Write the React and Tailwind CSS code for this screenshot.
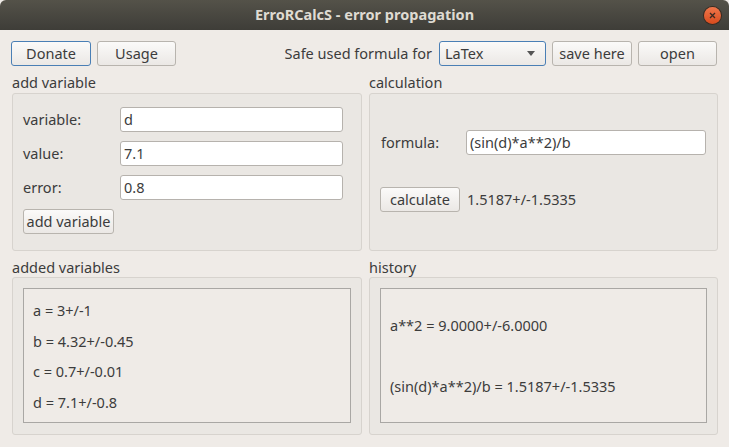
import React from "react";

const font = { fontFamily: '"Noto Sans", "Open Sans", sans-serif' };

function Btn({ children, className = "", focused = false }) {
  return (
    <div
      className={`flex items-center justify-center rounded-[3px] border bg-gradient-to-b from-[#fbfaf9] to-[#ebe8e5] text-[14.5px] text-[#3c3c3c] ${
        focused ? "border-[#4a7fb5]" : "border-[#b8b4ae]"
      } ${className}`}
    >
      {children}
    </div>
  );
}

function Input({ value, className = "" }) {
  return (
    <div
      className={`flex h-[25px] items-center rounded-[3px] border border-[#b6b2ad] bg-white pl-[3px] text-[14.5px] text-[#3c3c3c] ${className}`}
    >
      {value}
    </div>
  );
}

export default function App() {
  return (
    <div
      className="h-[447px] w-[729px] overflow-hidden bg-[#efebe7] text-[#3c3c3c]"
      style={font}
    >
      {/* title bar */}
      <div className="relative flex h-[30px] items-center justify-center rounded-t-[6px] bg-gradient-to-b from-[#545249] to-[#3e3d38]">
        <span className="text-[14.5px] font-bold text-[#dfdbd2]">
          ErroRCalcS - error propagation
        </span>
        <div className="absolute right-[8px] top-[7px] flex h-[17px] w-[17px] items-center justify-center rounded-full bg-gradient-to-b from-[#f0764a] to-[#d84a1b] shadow-[0_0_0_1px_#3a2a20]">
          <svg width="7" height="7" viewBox="0 0 7 7">
            <path d="M1 1L6 6M6 1L1 6" stroke="#3b2a22" strokeWidth="1.3" />
          </svg>
        </div>
      </div>

      {/* toolbar */}
      <div className="mt-[11px] flex h-[25px] items-center pl-[11px] pr-[12px]">
        <Btn focused className="h-[25px] w-[80px]">Donate</Btn>
        <Btn className="ml-[6px] h-[25px] w-[79px]">Usage</Btn>
        <span className="ml-auto text-[14.5px]">Safe used formula for</span>
        <div className="ml-[7px] flex h-[25px] w-[107px] items-center justify-between rounded-[3px] border border-[#4a7fb5] bg-gradient-to-b from-[#fbfaf9] to-[#ebe8e5] pl-[5px] pr-[10px] text-[14.5px]">
          <span>LaTex</span>
          <svg width="8" height="5" viewBox="0 0 8 5">
            <path d="M0 0H8L4 5Z" fill="#555" />
          </svg>
        </div>
        <Btn className="ml-[6px] h-[25px] w-[80px]">save here</Btn>
        <Btn className="ml-[6px] h-[25px] w-[79px]">open</Btn>
      </div>

      {/* top groups */}
      <div className="mt-[9px] flex gap-[7px] pl-[12px] pr-[11px]">
        <div className="flex w-[350px] flex-col">
          <div className="h-[18px] text-[14.5px] leading-[15px]">add variable</div>
          <div className="h-[158px] rounded-[3px] border border-[#d7d3ce] bg-[#eae7e3] pl-[10px] pt-[13px]">
            {[
              ["variable:", "d"],
              ["value:", "7.1"],
              ["error:", "0.8"],
            ].map(([l, v], i) => (
              <div key={i} className="mb-[9px] flex h-[25px] items-center">
                <span className="w-[97px] text-[14.5px]">{l}</span>
                <Input value={v} className="w-[223px]" />
              </div>
            ))}
            <Btn className="h-[25px] w-[91px]">add variable</Btn>
          </div>
        </div>
        <div className="flex w-[349px] flex-col">
          <div className="h-[18px] text-[14.5px] leading-[15px]">calculation</div>
          <div className="h-[158px] rounded-[3px] border border-[#d7d3ce] bg-[#eae7e3] pl-[10px] pt-[36px]">
            <div className="flex h-[25px] items-center">
              <span className="w-[86px] pl-[1px] text-[14.5px]">formula:</span>
              <Input value="(sin(d)*a**2)/b" className="w-[240px]" />
            </div>
            <div className="mt-[32px] flex h-[25px] items-center">
              <Btn className="h-[25px] w-[80px]">calculate</Btn>
              <span className="ml-[7px] text-[14.5px]">1.5187+/-1.5335</span>
            </div>
          </div>
        </div>
      </div>

      {/* bottom groups */}
      <div className="mt-[8px] flex gap-[7px] pl-[12px] pr-[11px]">
        <div className="flex w-[350px] flex-col">
          <div className="h-[18px] text-[14.5px] leading-[16px]">added variables</div>
          <div className="h-[158px] rounded-[3px] border border-[#d7d3ce] bg-[#eae7e3] px-[10px] pt-[10px]">
            <div className="flex h-[135px] flex-col border border-[#a9a7a4] bg-[#efebe7] pl-[9px] pt-[7px] text-[14.5px]">
              {["a = 3+/-1", "b = 4.32+/-0.45", "c = 0.7+/-0.01", "d = 7.1+/-0.8"].map((t) => (
                <div key={t} className="flex h-[30.5px] items-center">{t}</div>
              ))}
            </div>
          </div>
        </div>
        <div className="flex w-[349px] flex-col">
          <div className="h-[18px] text-[14.5px] leading-[16px]">history</div>
          <div className="h-[158px] rounded-[3px] border border-[#d7d3ce] bg-[#eae7e3] px-[10px] pt-[10px]">
            <div className="flex h-[135px] flex-col border border-[#a9a7a4] bg-[#efebe7] pl-[9px] pt-[27px] text-[14.5px]">
              <div className="flex h-[20px] items-center">a**2 = 9.0000+/-6.0000</div>
              <div className="mt-[41px] flex h-[20px] items-center">(sin(d)*a**2)/b = 1.5187+/-1.5335</div>
            </div>
          </div>
        </div>
      </div>
    </div>
  );
}
